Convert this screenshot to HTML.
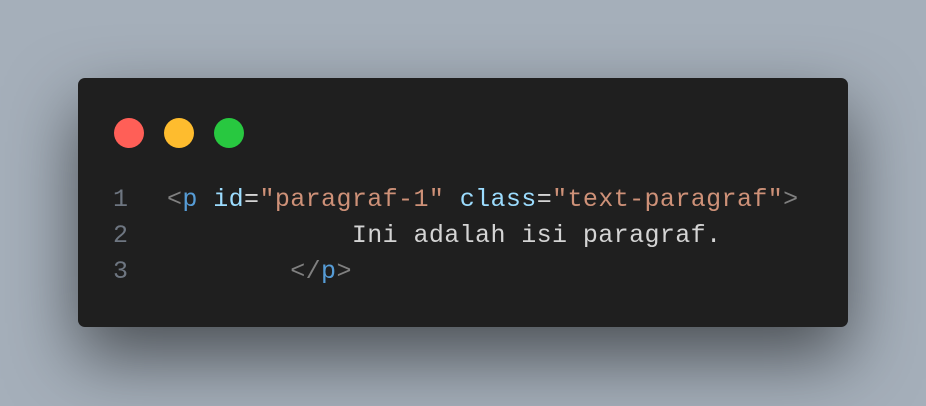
<!DOCTYPE html>
<html><head><style>
html,body{margin:0;padding:0}
body{width:926px;height:406px;background:#a5afba;position:relative;overflow:hidden}
.card{position:absolute;left:78px;top:78px;width:770px;height:249px;background:#1f1f1f;border-radius:7px;box-shadow:0 30px 70px rgba(0,0,0,.55)}
.dot{position:absolute;top:118px;width:30px;height:30px;border-radius:50%}
.code{position:absolute;top:182px;font-family:"Liberation Mono",monospace;font-size:25px;line-height:36px;letter-spacing:0.4px;color:#d4d4d4;white-space:pre}
.ln{left:113px;color:#6e7681}
.src{left:167px}
.g{color:#808080}.t{color:#569cd6}.a{color:#9cdcfe}.s{color:#ce9178}
</style></head><body>
<div class="card"></div>
<div class="dot" style="left:114px;background:#ff5f57"></div>
<div class="dot" style="left:164px;background:#febc2e"></div>
<div class="dot" style="left:214px;background:#28c840"></div>
<div class="code ln">1
2
3</div>
<div class="code src"><span class="g">&lt;</span><span class="t">p</span> <span class="a">id</span>=<span class="s">"paragraf-1"</span> <span class="a">class</span>=<span class="s">"text-paragraf"</span><span class="g">&gt;</span>
            Ini adalah isi paragraf.
        <span class="g">&lt;/</span><span class="t">p</span><span class="g">&gt;</span></div>
</body></html>
